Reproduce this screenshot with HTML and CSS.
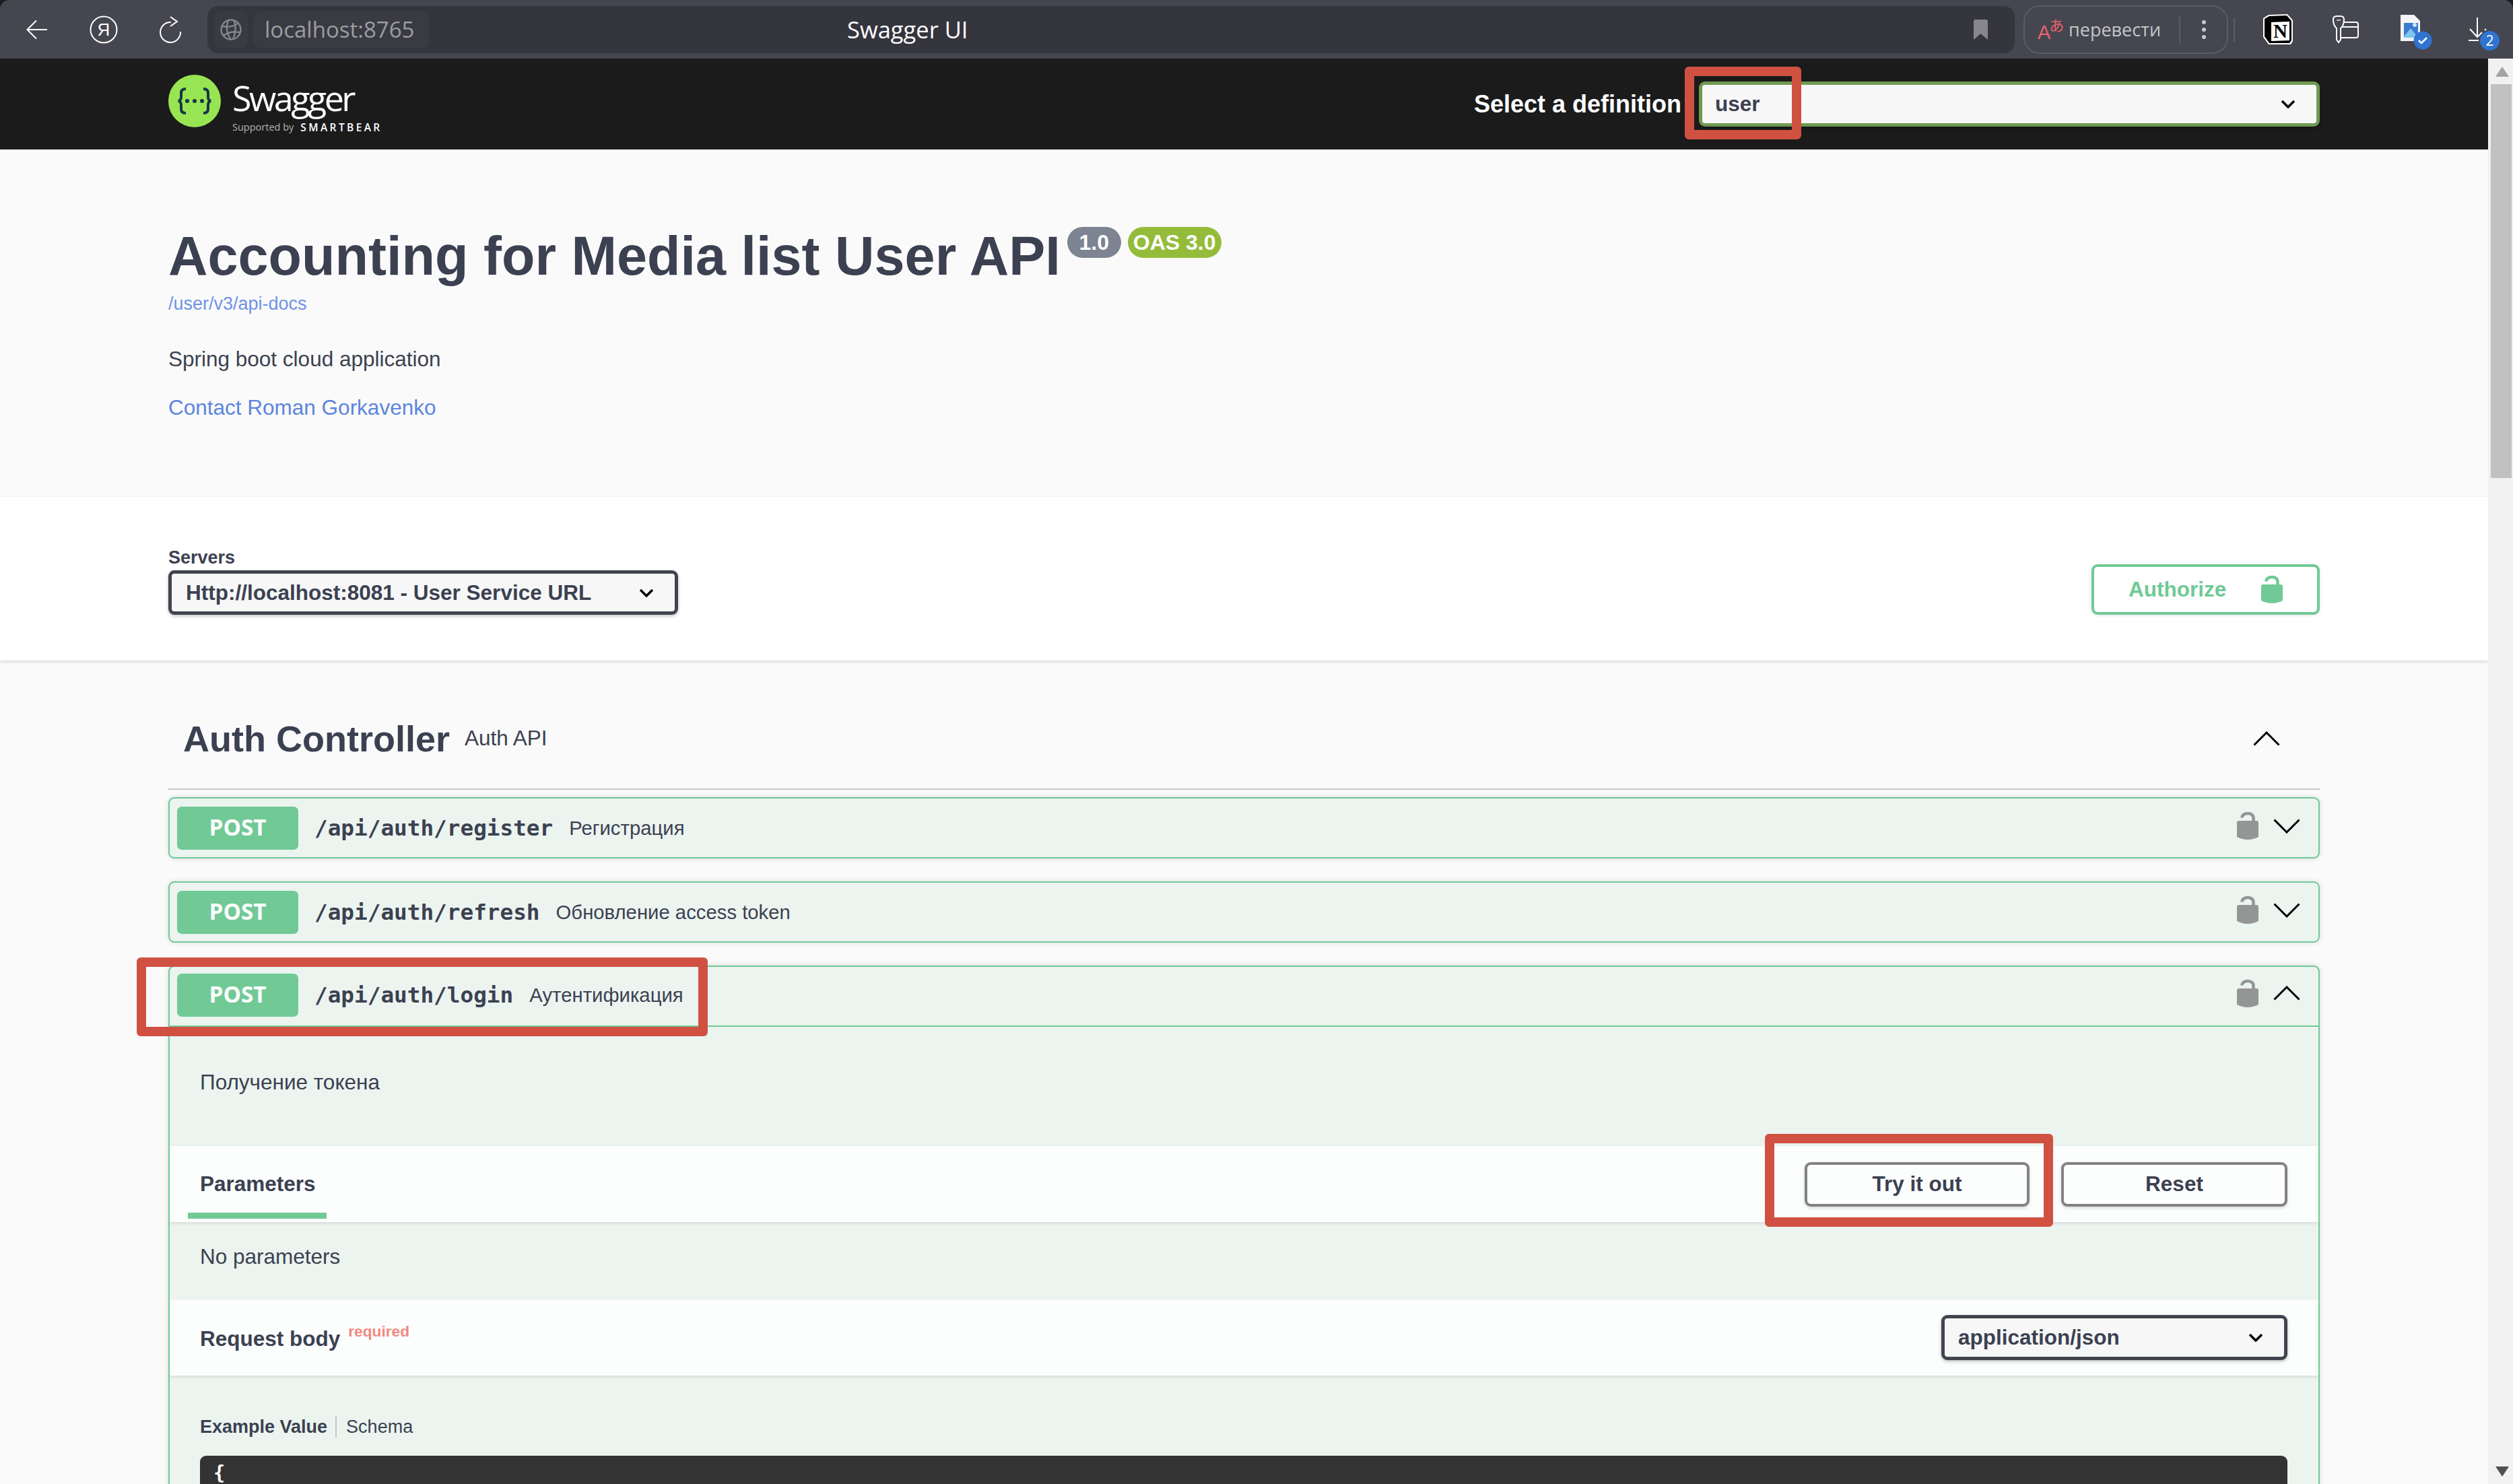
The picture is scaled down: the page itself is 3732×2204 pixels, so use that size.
FILE: index.html
```html
<!DOCTYPE html>
<html>
<head>
    <title>Swagger UI</title>
    <link rel="stylesheet" href="styles.css">
</head>
<body>
    <div class="chrome">
        <svg class="ic-back" width="32" height="30" viewBox="0 0 32 30"><path d="M31 15H2M15 1.5 1.5 15 15 28.5" fill="none" stroke="#fff" stroke-width="2"/></svg>
        <svg class="ic-ya" width="42" height="42" viewBox="0 0 42 42"><circle cx="21" cy="21" r="19.5" fill="none" stroke="#fff" stroke-width="2"/><text x="21" y="30" font-family="Liberation Sans" font-size="26" fill="#fff" text-anchor="middle">Я</text></svg>
        <svg class="ic-reload" width="34" height="40" viewBox="0 0 34 40"><path d="M17 9A15 15 0 1 0 31 23" fill="none" stroke="#fff" stroke-width="2"/><path d="M16 1 26 8 16 15" fill="none" stroke="#fff" stroke-width="2"/></svg>
        <div class="addr">
            <div class="chip chip-globe">
                <svg width="32" height="32" viewBox="0 0 32 32"><g fill="none" stroke="#85868c" stroke-width="2.4"><circle cx="16" cy="16" r="14.5"/><path d="M3 11C12 13 22 11 27 6M5 25C14 18 22 19 30 20M12 2C8 12 10 22 15 30M20 2C24 10 23 22 19 30"/></g></svg>
            </div>
            <div class="chip chip-url">localhost:8765</div>
            <div class="page-title">Swagger UI</div>
            <svg class="ic-mark" width="23" height="30" viewBox="0 0 23 30"><path d="M1 3Q1 0 4 0H19Q22 0 22 3V30L11.500 21 1 30Z" fill="#87878b"/></svg>
        </div>
        <div class="translate">
            <div class="tr-icon"><span class="tr-a">A</span><span class="tr-j">あ</span></div>
            <span class="translate-text">перевести</span>
            <span class="translate-sep"></span>
            <span class="dots"><i></i><i></i><i></i></span>
        </div>
        <div class="bar-sep"></div>
        <svg class="ic-notion" width="46" height="46" viewBox="0 0 46 46"><path d="M9 1 37 0 45 9V40L42 45 9 45 1 34V6Z" fill="#fff"/><path d="M10 3 36 2 43 10V39L40 43 10 43 3 33V7Z" fill="#000"/><path d="M13 12 40 11V39L13 40Z" fill="#fff"/><text x="26.500" y="35" font-family="Liberation Serif" font-weight="700" font-size="29" text-anchor="middle" fill="#000">N</text></svg>
        <svg class="ic-keys" width="42" height="42" viewBox="0 0 42 42"><g fill="none" stroke="#fff" stroke-width="2"><path d="M3 6Q3 1 8 1H14Q19 1 19 6 19 15 14 19V36L11 40 8 36V19Q3 15 3 6Z"/><path d="M8 7H14" stroke="#bbb"/><path d="M19 10H37Q40 10 40 13V30Q40 33 37 33H15M16 17H40"/></g></svg>
        <svg class="ic-doc" width="48" height="53" viewBox="0 0 48 53"><path d="M0 0H20L29 9V39H0Z" fill="#f4f4f6"/><path d="M5 12H26V33H5Z" fill="#3a7bd0"/><path d="M5 32 15 20 23 30 26 27V34H5Z" fill="#7fc4ee"/><circle cx="21" cy="15" r="3" fill="#cfe2f7"/><circle cx="33" cy="38" r="13.500" fill="#2e74d0"/><path d="M27 38 31 42 39 34" fill="none" stroke="#fff" stroke-width="2.600"/></svg>
        <div class="ic-dl">
            <svg width="46" height="36" viewBox="0 0 46 36"><path d="M13 0V29M2 17 13 29 20 22M26 17 24 19M0 34H15" fill="none" stroke="#fff" stroke-width="2"/></svg>
            <span class="dl-badge">2</span>
        </div>
    </div>

    <div class="viewport">
        <div class="main">
            <div class="topbar">
                <div class="logo">
                    <svg class="logo-mark" width="78" height="78" viewBox="0 0 78 78"><circle cx="39" cy="39" r="39" fill="#97e552"/><g fill="none" stroke="#173646" stroke-width="4"><path d="M26 21Q19 21 19 27V33Q19 38 15 39 19 40 19 45V51Q19 57 26 57"/><path d="M52 21Q59 21 59 27V33Q59 38 63 39 59 40 59 45V51Q59 57 52 57"/></g><g fill="#173646"><circle cx="28" cy="39" r="3"/><circle cx="39" cy="39" r="3"/><circle cx="50" cy="39" r="3"/></g></svg>
                    <div class="logo-text">
                        <div class="logo-name">Swagger</div>
                        <div class="logo-sub"><span class="logo-by">Supported by</span><span class="logo-bear">SMARTBEAR</span></div>
                    </div>
                </div>
                <div class="def">
                    <span class="def-label">Select a definition</span>
                    <div class="select select-def">
                        <span>user</span>
                        <svg class="sel-chev" width="22" height="13" viewBox="0 0 22 13"><path d="M2 2 11 11 20 2" fill="none" stroke="#000" stroke-width="3.500"/></svg>
                    </div>
                </div>
            </div>

            <div class="info">
                <div class="title-row">
                    <h1 class="title">Accounting for Media list User API</h1>
                    <span class="badge badge-grey">1.0</span>
                    <span class="badge badge-oas">OAS 3.0</span>
                </div>
                <div class="url">/user/v3/api-docs</div>
                <div class="descr">Spring boot cloud application</div>
                <div class="contact">Contact Roman Gorkavenko</div>
            </div>

            <div class="scheme">
                <div>
                    <div class="servers-label">Servers</div>
                    <div class="select select-server">
                        <span>Http://localhost:8081 - User Service URL</span>
                        <svg class="sel-chev" width="22" height="13" viewBox="0 0 22 13"><path d="M2 2 11 11 20 2" fill="none" stroke="#000" stroke-width="3.500"/></svg>
                    </div>
                </div>
                <div class="authorize">
                    <span>Authorize</span>
                    <svg width="32" height="41" viewBox="0 0 32 41"><path d="M7.500 8.500A8.500 6.500 0 0 1 24.500 8.500V15" fill="none" stroke="#71c996" stroke-width="4.500"/><path d="M0 16Q0 13 3 13H29Q32 13 32 16V37Q24 41 16 41 8 41 0 37Z" fill="#71c996"/></svg>
                </div>
            </div>

            <div class="tag-section">
                <div class="tag-head">
                    <span class="tag-name">Auth Controller</span>
                    <span class="tag-desc">Auth API</span>
                    <svg class="tag-chev" width="40" height="22" viewBox="0 0 40 22"><path d="M1.500 20.500 20 2 38.500 20.500" fill="none" stroke="#000" stroke-width="3"/></svg>
                </div>

                <div class="opblock">
                    <div class="op-head">
                        <span class="method">POST</span>
                        <span class="path">/api/auth/register</span>
                        <span class="op-desc">Регистрация</span>
                        <svg class="op-lock" width="32" height="41" viewBox="0 0 32 41"><path d="M7.500 8.500A8.500 6.500 0 0 1 24.500 8.500V15" fill="none" stroke="#939694" stroke-width="4.500"/><path d="M0 16Q0 13 3 13H29Q32 13 32 16V37Q24 41 16 41 8 41 0 37Z" fill="#939694"/></svg>
                        <svg class="op-chev" width="40" height="22" viewBox="0 0 40 22"><path d="M1.500 1.500 20 20 38.500 1.500" fill="none" stroke="#000" stroke-width="3"/></svg>
                    </div>
                </div>

                <div class="opblock">
                    <div class="op-head">
                        <span class="method">POST</span>
                        <span class="path">/api/auth/refresh</span>
                        <span class="op-desc">Обновление access token</span>
                        <svg class="op-lock" width="32" height="41" viewBox="0 0 32 41"><path d="M7.500 8.500A8.500 6.500 0 0 1 24.500 8.500V15" fill="none" stroke="#939694" stroke-width="4.500"/><path d="M0 16Q0 13 3 13H29Q32 13 32 16V37Q24 41 16 41 8 41 0 37Z" fill="#939694"/></svg>
                        <svg class="op-chev" width="40" height="22" viewBox="0 0 40 22"><path d="M1.500 1.500 20 20 38.500 1.500" fill="none" stroke="#000" stroke-width="3"/></svg>
                    </div>
                </div>

                <div class="opblock opblock-open">
                    <div class="op-head op-head-open">
                        <span class="method">POST</span>
                        <span class="path">/api/auth/login</span>
                        <span class="op-desc">Аутентификация</span>
                        <svg class="op-lock" width="32" height="41" viewBox="0 0 32 41"><path d="M7.500 8.500A8.500 6.500 0 0 1 24.500 8.500V15" fill="none" stroke="#939694" stroke-width="4.500"/><path d="M0 16Q0 13 3 13H29Q32 13 32 16V37Q24 41 16 41 8 41 0 37Z" fill="#939694"/></svg>
                        <svg class="op-chev" width="40" height="22" viewBox="0 0 40 22"><path d="M1.500 20.500 20 2 38.500 20.500" fill="none" stroke="#000" stroke-width="3"/></svg>
                    </div>
                    <div class="op-summary">Получение токена</div>
                    <div class="section-head">
                        <div class="tab">Parameters</div>
                        <div class="btns">
                            <div class="btn btn-try">Try it out</div>
                            <div class="btn btn-reset">Reset</div>
                        </div>
                    </div>
                    <div class="no-params">No parameters</div>
                    <div class="section-head section-body">
                        <div class="body-title">Request body<span class="required">required</span></div>
                        <div class="select select-type">
                            <span>application/json</span>
                            <svg class="sel-chev" width="22" height="13" viewBox="0 0 22 13"><path d="M2 2 11 11 20 2" fill="none" stroke="#000" stroke-width="3.500"/></svg>
                        </div>
                    </div>
                    <div class="example">
                        <div class="example-tabs"><b>Example Value</b><span class="ex-sep"></span><span>Schema</span></div>
                        <div class="code">{</div>
                    </div>
                </div>
            </div>
        </div>

        <div class="scrollbar">
            <div class="sb-arrow"><i class="tri-up"></i></div>
            <div class="sb-thumb"></div>
            <div class="sb-rest"></div>
            <div class="sb-arrow"><i class="tri-down"></i></div>
        </div>
    </div>

    <!-- red annotation frames drawn over the screenshot -->
    <div class="mark mark-def"></div>
    <div class="mark mark-login"></div>
    <div class="mark mark-try"></div>
</body>
</html>
```

FILE: styles.css
```css
* {
    box-sizing: border-box;
}
html, body {
    margin: 0;
    height: 2204px;
    overflow: hidden;
    background: #1b1b1b;
}
body {
    font-family: "Liberation Sans", Arial, sans-serif;
    color: #3b4151;
    display: flex;
    flex-direction: column;
    position: relative;
}

/* browser bar */
.chrome {
    height: 87px;
    flex: none;
    display: flex;
    align-items: center;
    background: #45464f;
    border-radius: 14px 14px 0 0;
    font-family: "Open Sans", sans-serif;
}
.ic-back {
    margin: 0 0 0 39px;
}
.ic-ya {
    margin-left: 62px;
}
.ic-reload {
    margin-left: 62px;
}
.addr {
    width: 2684px;
    height: 70px;
    margin-left: 37px;
    background: #34353d;
    border-radius: 16px;
    display: flex;
    align-items: center;
    padding: 0 39px 0 10px;
}
.chip {
    height: 56px;
    border-radius: 12px;
    background: #393a42;
    display: flex;
    align-items: center;
}
.chip-globe {
    width: 50px;
    justify-content: center;
}
.chip-url {
    width: 261px;
    margin-left: 8px;
    padding-left: 17px;
    color: #9c9da2;
    font-size: 33px;
}
.page-title {
    margin-left: 621px;
    color: #fff;
    font-size: 34.500px;
}
.ic-mark {
    margin-left: auto;
}
.translate {
    width: 304px;
    height: 72px;
    margin-left: 13px;
    border: 2px solid #5b5c64;
    border-radius: 24px;
    display: flex;
    align-items: center;
    padding-left: 19px;
}
.tr-icon {
    width: 40px;
    height: 38px;
    display: flex;
    color: #ea636b;
}
.tr-a {
    align-self: flex-end;
    font-family: "Liberation Sans", sans-serif;
    font-size: 29px;
    line-height: 29px;
}
.tr-j {
    align-self: flex-start;
    margin-left: -2px;
    font-family: "Noto Sans CJK JP", sans-serif;
    font-size: 22px;
    line-height: 22px;
}
.translate-text {
    margin-left: 6px;
    color: #c4c5c9;
    font-size: 27px;
}
.translate-sep {
    width: 2px;
    height: 40px;
    background: #5b5c64;
    margin-left: 27px;
}
.dots {
    margin-left: 32px;
    display: flex;
    flex-direction: column;
    gap: 5px;
}
.dots i {
    width: 6px;
    height: 6px;
    border-radius: 50%;
    background: #c9c9cd;
}
.bar-sep {
    width: 2px;
    height: 36px;
    background: #5b5c64;
    margin-left: 8px;
}
.ic-notion {
    margin-left: 41px;
}
.ic-keys {
    margin-left: 56px;
}
.ic-doc {
    margin: 9px 0 0 61px;
}
.ic-dl {
    width: 46px;
    height: 46px;
    margin: 11px 0 0 53px;
    display: flex;
    position: relative;
}
.dl-badge {
    position: absolute;
    left: 17px;
    top: 20px;
    width: 29px;
    height: 29px;
    border-radius: 50%;
    background: #2e74d0;
    color: #fff;
    font-size: 21px;
    line-height: 29px;
    text-align: center;
}

/* page */
.viewport {
    flex: 1;
    display: flex;
    min-height: 0;
}
.main {
    flex: 1;
    min-width: 0;
    background: #fafafa;
    overflow: hidden;
}
.scrollbar {
    width: 37px;
    flex: none;
    background: #f1f1f1;
    display: flex;
    flex-direction: column;
    padding-left: 4px;
}
.sb-arrow {
    height: 38px;
    flex: none;
    display: flex;
    align-items: center;
    justify-content: center;
}
.tri-up {
    border: 10px solid transparent;
    border-top: 0;
    border-bottom: 15px solid #a3a3a3;
}
.tri-down {
    border: 10px solid transparent;
    border-bottom: 0;
    border-top: 15px solid #505050;
}
.sb-thumb {
    height: 585px;
    flex: none;
    background: #c1c1c1;
    margin-right: 2px;
}
.sb-rest {
    flex: 1;
}

.topbar {
    height: 135px;
    background: #1b1b1b;
    padding: 0 250px;
    display: flex;
    align-items: center;
    justify-content: space-between;
}
.logo {
    display: flex;
    gap: 17px;
    color: #fff;
    font-family: "Open Sans", sans-serif;
    margin-top: -2px;
}
.logo-text {
    display: flex;
    flex-direction: column;
}
.logo-name {
    font-size: 52px;
    line-height: 68px;
    letter-spacing: -3.500px;
}
.logo-sub {
    display: flex;
    align-items: center;
    gap: 10px;
    line-height: 16px;
    margin-top: 2px;
}
.logo-by {
    font-size: 14.500px;
    color: #b5b5b5;
}
.logo-bear {
    font-size: 15.500px;
    font-weight: 600;
    letter-spacing: 3.400px;
}
.def {
    display: flex;
    align-items: center;
    gap: 26px;
}
.def-label {
    color: #fff;
    font-weight: 700;
    font-size: 36px;
}
.select {
    display: flex;
    align-items: center;
    justify-content: space-between;
    background: #f7f7f7;
    border: 5px solid #41444e;
    border-radius: 9px;
    font-weight: 700;
    font-size: 31.500px;
    box-shadow: 0 2px 5px rgba(0, 0, 0, .25);
}
.select-def {
    width: 922px;
    height: 67px;
    border-color: #6f9a50;
    padding: 0 31px 0 19px;
}
.select-server {
    width: 757px;
    height: 66px;
    padding: 0 31px 0 21px;
}
.select-type {
    width: 514px;
    height: 67px;
    padding: 0 31px 0 20px;
}

.info {
    height: 516px;
    padding-top: 115px;
}
.info, .scheme {
    padding-left: 250px;
    padding-right: 250px;
}
.title-row {
    display: flex;
    align-items: flex-start;
    gap: 10px;
}
.title {
    margin: 0;
    font-size: 81px;
    line-height: 86px;
    font-weight: 700;
}
.badge {
    height: 46px;
    border-radius: 23px;
    color: #fff;
    font-weight: 700;
    font-size: 32px;
    line-height: 46px;
    text-align: center;
}
.badge-grey {
    width: 80px;
    background: #7d8492;
}
.badge-oas {
    width: 139px;
    background: #94bc3a;
}
.url {
    margin-top: 11px;
    font-size: 27px;
    line-height: 34px;
    color: #6f93e6;
}
.descr {
    margin-top: 45px;
    font-size: 31.500px;
    line-height: 40px;
}
.contact {
    margin-top: 32px;
    font-size: 31.500px;
    line-height: 40px;
    color: #5c85de;
}

.scheme {
    height: 243px;
    background: #fff;
    box-shadow: 0 2px 5px rgba(0, 0, 0, .15);
    display: flex;
    align-items: flex-end;
    justify-content: space-between;
    padding-bottom: 68px;
    position: relative;
}
.servers-label {
    font-weight: 700;
    font-size: 27px;
    line-height: 34px;
    margin-bottom: 2px;
}
.authorize {
    width: 339px;
    height: 75px;
    border: 4px solid #71c996;
    border-radius: 9px;
    display: flex;
    align-items: center;
    color: #71c996;
    font-weight: 700;
    font-size: 31.500px;
    padding-left: 51px;
    gap: 52px;
    box-shadow: 0 1px 5px rgba(0, 0, 0, .1);
}

.tag-section {
    padding: 41px 250px 0;
}
.tag-head {
    height: 151px;
    border-bottom: 2px solid #c6c8cd;
    display: flex;
    align-items: center;
    padding: 0 59px 0 22px;
}
.tag-name {
    font-weight: 700;
    font-size: 54px;
}
.tag-desc {
    margin-left: 22px;
    font-size: 31.500px;
}
.tag-chev {
    margin-left: auto;
}

.opblock {
    height: 91px;
    margin-top: 34px;
    background: #ebf4ef;
    border: 2px solid #71c996;
    border-radius: 9px;
    box-shadow: 0 0 7px rgba(0, 0, 0, .14);
    overflow: hidden;
}
.tag-head + .opblock {
    margin-top: 11px;
}
.opblock-open {
    height: 1200px;
}
.op-head {
    height: 87px;
    display: flex;
    align-items: center;
    padding: 0 27px 0 11px;
}
.op-head-open {
    height: 89px;
    border-bottom: 2px solid #71c996;
    padding-bottom: 3px;
}
.method {
    width: 180px;
    height: 64px;
    border-radius: 7px;
    background: #71c996;
    color: #fff;
    font-family: "Open Sans", sans-serif;
    font-weight: 700;
    font-size: 33.300px;
    line-height: 60px;
    text-align: center;
}
.path {
    margin-left: 24px;
    font-family: "DejaVu Sans Mono", monospace;
    font-weight: 700;
    font-size: 32.700px;
}
.op-desc {
    margin-left: 24px;
    font-size: 29.300px;
}
.op-lock {
    margin: 0 0 6px auto;
}
.op-chev {
    margin: 0 0 6px 22px;
}

.op-summary {
    height: 177px;
    padding: 62px 0 0 45px;
    font-size: 31.500px;
    line-height: 40px;
}
.section-head {
    height: 113px;
    background: #fcfdfd;
    box-shadow: 0 2px 5px rgba(0, 0, 0, .1);
    display: flex;
    align-items: center;
    justify-content: space-between;
    padding: 0 46px 0 27px;
}
.tab {
    align-self: flex-start;
    width: 206px;
    height: 108px;
    padding: 36px 0 0 18px;
    border-bottom: 9px solid #71c996;
    font-weight: 700;
    font-size: 31.500px;
    line-height: 40px;
}
.btns {
    display: flex;
    gap: 47px;
}
.btn {
    height: 66px;
    border: 4px solid #828282;
    border-radius: 9px;
    background: #fcfdfd;
    font-weight: 700;
    font-size: 31.500px;
    line-height: 56px;
    text-align: center;
    box-shadow: 0 2px 5px rgba(0, 0, 0, .15);
}
.btn-try {
    width: 334px;
}
.btn-reset {
    width: 336px;
}
.no-params {
    height: 115px;
    padding: 31px 0 0 45px;
    font-size: 31.500px;
    line-height: 40px;
}
.section-body {
    padding-left: 45px;
}
.body-title {
    font-weight: 700;
    font-size: 31.500px;
    margin-bottom: 2px;
}
.required {
    margin-left: 12px;
    font-size: 22.700px;
    color: #f28a7f;
    vertical-align: 14px;
}
.example {
    padding: 57px 46px 0 45px;
}
.example-tabs {
    height: 38px;
    display: flex;
    align-items: center;
    font-size: 27px;
}
.ex-sep {
    width: 2px;
    height: 32px;
    background: #c3cbc7;
    margin: 0 14px 0 12px;
}
.code {
    margin-top: 24px;
    height: 400px;
    background: #333;
    border-radius: 9px;
    padding: 8px 20px;
    color: #fff;
    font-family: "DejaVu Sans Mono", monospace;
    font-weight: 700;
    font-size: 28.600px;
    line-height: 34px;
}

/* annotations */
.mark {
    position: absolute;
    border: 14px solid #d05142;
    border-radius: 6px;
}
.mark-def {
    left: 2502px;
    top: 99px;
    width: 173px;
    height: 108px;
}
.mark-login {
    left: 203px;
    top: 1422px;
    width: 848px;
    height: 117px;
}
.mark-try {
    left: 2621px;
    top: 1684px;
    width: 428px;
    height: 138px;
}
```
